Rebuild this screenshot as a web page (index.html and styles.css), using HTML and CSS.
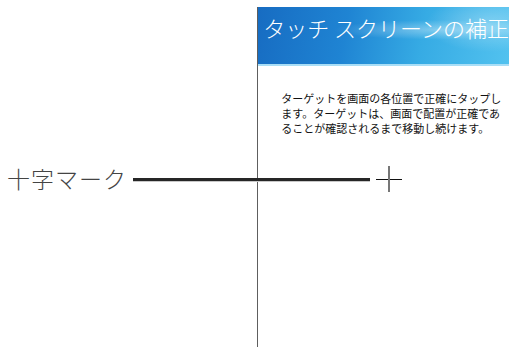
FILE: index.html
```html
<!DOCTYPE html>
<html lang="ja">
<head>
    <meta charset="UTF-8">
    <meta name="viewport" content="width=device-width, initial-scale=1.0">
    <title>タッチ スクリーンの補正</title>
    <link rel="stylesheet" href="styles.css">
</head>
<body>

    <div class="stage">
        <div class="legend">
            <span class="legend-label">十字マーク</span>
        </div>

        <section class="screen">
            <header class="screen-head">
                <h1>タッチ スクリーンの補正</h1>
            </header>
            <p class="screen-text">ターゲットを画面の各位置で正確にタップし<br>ます。ターゲットは、画面で配置が正確であ<br>ることが確認されるまで移動し続けます。</p>
        </section>

        <!-- callout line from the label to the target -->
        <div class="pointer"></div>
        <div class="cross"></div>
    </div>

</body>
</html>
```

FILE: styles.css
```css
body {
    margin: 0;
    background-color: #ffffff;
    font-family: "Noto Sans CJK JP", "Noto Sans", sans-serif;
    overflow: hidden;
}

.stage {
    position: relative;
    display: flex;
    width: 509px;
    height: 347px;
}

.legend {
    width: 258px;
    padding-top: 163px;
    padding-left: 7px;
    box-sizing: border-box;
}

.legend-label {
    font-size: 23px;
    font-weight: 300;
    line-height: 30px;
    color: #444444;
    letter-spacing: 1px;
}

.screen {
    flex: 1;
    margin-top: 7px;
    border-left: 1px solid #5e5e5e;
}

.screen-head {
    height: 57px;
    border-bottom: 2px solid #a9def6;
    background:
        radial-gradient(ellipse 150px 14px at 72% 40%, rgba(255, 255, 255, 0.35), rgba(255, 255, 255, 0) 70%),
        radial-gradient(ellipse 90px 40px at 92% 30%, rgba(255, 255, 255, 0.3), rgba(255, 255, 255, 0) 70%),
        linear-gradient(100deg, #176cc2 0%, #1f84d3 35%, #36abe4 65%, #52c2ef 100%);
}

.screen-head h1 {
    margin: 0;
    padding: 5px 0 0 5px;
    font-size: 22px;
    font-weight: 300;
    line-height: 30px;
    color: #ffffff;
    white-space: nowrap;
}

.screen-text {
    margin: 25px 0 0 23px;
    font-size: 11px;
    line-height: 15px;
    color: #111111;
}

.pointer {
    position: absolute;
    left: 133px;
    top: 178px;
    width: 237px;
    height: 3px;
    background-color: #262626;
    border-bottom: 1px solid #c8c8c8;
}

.cross {
    position: absolute;
    left: 376px;
    top: 166px;
    width: 26px;
    height: 26px;
}

.cross::before {
    content: "";
    position: absolute;
    left: 0;
    top: 13px;
    width: 26px;
    height: 1px;
    background-color: #111111;
}

.cross::after {
    content: "";
    position: absolute;
    left: 12px;
    top: 0;
    width: 2px;
    height: 26px;
    background-color: #777777;
}
```
